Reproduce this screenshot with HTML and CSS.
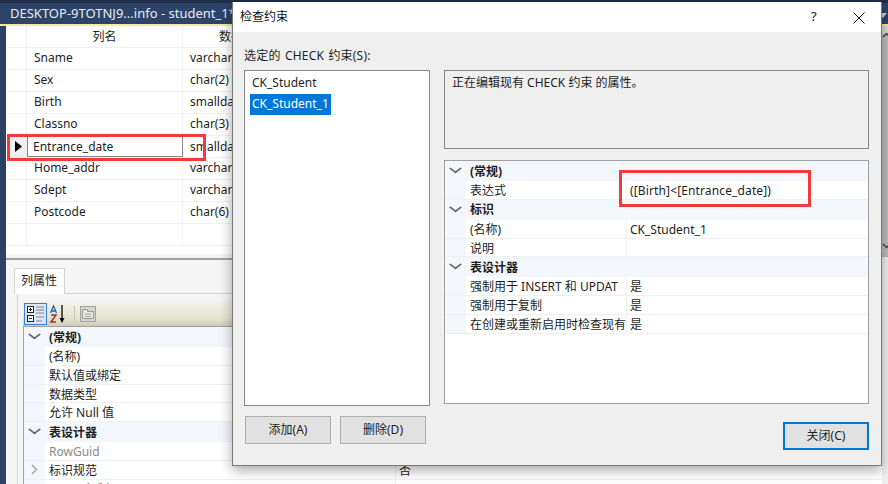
FILE: index.html
```html
<!DOCTYPE html>
<html lang="zh">
<head>
<meta charset="utf-8">
<title>检查约束</title>
<link rel="stylesheet" href="styles.css">
</head>
<body>
<div class="app">
  <div class="titlebar">
    <span class="doc-title">DESKTOP-9TOTNJ9...info - student_1*</span>
    <svg class="tb-drop" width="8" height="5" viewBox="0 0 8 5"><path d="M0 0h8L4 5z" fill="#c9d3e2"/></svg>
  </div>
  <div class="designer">
    <div class="tbl">
      <div class="tr th"><div class="rh"></div><div class="c1">列名</div><div class="c2">数据类型</div></div>
      <div class="tr"><div class="rh"></div><div class="c1">Sname</div><div class="c2">varchar(20)</div></div>
      <div class="tr"><div class="rh"></div><div class="c1">Sex</div><div class="c2">char(2)</div></div>
      <div class="tr"><div class="rh"></div><div class="c1">Birth</div><div class="c2">smalldatetime</div></div>
      <div class="tr"><div class="rh"></div><div class="c1">Classno</div><div class="c2">char(3)</div></div>
      <div class="tr cur"><div class="rh"><svg width="7" height="11" viewBox="0 0 7 11"><path d="M0 0l7 5.500-7 5.500z" fill="#000"/></svg></div><div class="c1">Entrance_date</div><div class="c2">smalldatetime</div></div>
      <div class="tr"><div class="rh"></div><div class="c1">Home_addr</div><div class="c2">varchar(40)</div></div>
      <div class="tr"><div class="rh"></div><div class="c1">Sdept</div><div class="c2">varchar(20)</div></div>
      <div class="tr"><div class="rh"></div><div class="c1">Postcode</div><div class="c2">char(6)</div></div>
      <div class="tr"><div class="rh"></div><div class="c1"></div><div class="c2"></div></div>
    </div>
    <div class="splitter"></div>
    <div class="tabs"><div class="tab">列属性</div></div>
    <div class="tabpane">
      <div class="toolbar">
        <div class="tool active">
          <svg width="20" height="18" viewBox="0 0 20 18"><g fill="none" stroke="#222"><rect x="1.500" y="1.500" width="6" height="6" fill="#fff"/><rect x="1.500" y="10.500" width="6" height="6" fill="#fff"/><path d="M3 4.500h3M4.500 3v3M3 13.500h3"/></g><path d="M10 2h8M10 5h8M10 8h8M10 12h8M10 16h6" stroke="#7d8a9c"/></svg>
        </div>
        <div class="tool sort">
          <svg width="16" height="20" viewBox="0 0 16 20"><path d="M.5 9l3-7 3 7M1.500 7h4" fill="none" stroke="#2a5fb0" stroke-width="1.300"/><path d="M1 11h5l-5 7h5" fill="none" stroke="#a3312a" stroke-width="1.500"/><path d="M12 1v15" stroke="#000" stroke-width="1.300"/><path d="M9.500 14h5L12 19z" fill="#000"/></svg>
        </div>
        <div class="tsep"></div>
        <div class="tool">
          <svg width="16" height="16" viewBox="0 0 16 16"><rect x=".5" y=".5" width="15" height="15" fill="#d4d4ce" stroke="#a4a49e"/><path d="M2.500 3.500h5v2h6v7h-11z" fill="#e6e6e0" stroke="#9c9c96"/><path d="M5 8h6M5 10.500h6" stroke="#a8a8a2"/></svg>
        </div>
      </div>
      <div class="pg bottom-pg">
        <div class="sec"><b>(常规)</b></div>
        <div class="pr"><div class="gut"></div><div class="pn">(名称)</div></div>
        <div class="pr"><div class="gut"></div><div class="pn">默认值或绑定</div></div>
        <div class="pr"><div class="gut"></div><div class="pn">数据类型</div></div>
        <div class="pr"><div class="gut"></div><div class="pn">允许 Null 值</div></div>
        <div class="sec"><b>表设计器</b></div>
        <div class="pr"><div class="gut"></div><div class="pn dim">RowGuid</div></div>
        <div class="pr"><div class="gut"><svg class="exp" width="7" height="11" viewBox="0 0 7 11"><path d="M1 1l4.500 4.500L1 10" fill="none" stroke="#a8a8a8" stroke-width="1.500"/></svg></div><div class="pn">标识规范</div><div class="pv">否</div></div>
        <div class="pr"><div class="gut"></div><div class="pn">不用于复制</div><div class="pv">否</div></div>
      </div>
    </div>
  </div>
  <div class="sidebar">
    <svg class="up" width="9" height="6" viewBox="0 0 9 6"><path d="M1 5l3.500-3.500L8 5" fill="none" stroke="#444" stroke-width="1.500"/></svg>
    <svg class="down" width="9" height="6" viewBox="0 0 9 6"><path d="M1 1l3.500 3.500L8 1" fill="none" stroke="#444" stroke-width="1.500"/></svg>
  </div>
</div>

<div class="redbox box-a"></div>

<div class="dialog">
  <div class="dlg-title">
    <span>检查约束</span>
    <span class="help">?</span>
    <svg class="close" width="12" height="12" viewBox="0 0 12 12"><path d="M.5.500l11 11M11.500.500l-11 11" stroke="#111" fill="none"/></svg>
  </div>
  <div class="dlg-body">
    <div class="col-left">
      <div class="lbl">选定的 CHECK 约束(S):</div>
      <div class="listbox">
        <div class="li">CK_Student</div>
        <div class="li sel">CK_Student_1</div>
      </div>
      <div class="btns">
        <button class="btn">添加(A)</button>
        <button class="btn">删除(D)</button>
      </div>
    </div>
    <div class="col-right">
      <div class="desc">正在编辑现有 CHECK 约束 的属性。</div>
      <div class="pg dlg-pg">
        <div class="sec"><b>(常规)</b></div>
        <div class="pr"><div class="gut"></div><div class="pn">表达式</div><div class="pv expr">([Birth]&lt;[Entrance_date])</div></div>
        <div class="sec"><b>标识</b></div>
        <div class="pr"><div class="gut"></div><div class="pn">(名称)</div><div class="pv">CK_Student_1</div></div>
        <div class="pr"><div class="gut"></div><div class="pn">说明</div><div class="pv"></div></div>
        <div class="sec"><b>表设计器</b></div>
        <div class="pr"><div class="gut"></div><div class="pn">强制用于 INSERT 和 UPDAT</div><div class="pv">是</div></div>
        <div class="pr"><div class="gut"></div><div class="pn">强制用于复制</div><div class="pv">是</div></div>
        <div class="pr"><div class="gut"></div><div class="pn">在创建或重新启用时检查现有</div><div class="pv">是</div></div>
      </div>
      <button class="btn primary">关闭(C)</button>
    </div>
  </div>
</div>

<div class="redbox box-b"></div>
</body>
</html>
```
FILE: styles.css
```css
* { box-sizing: border-box; }
html, body { margin: 0; padding: 0; }
body {
  width: 888px;
  height: 484px;
  overflow: hidden;
  position: relative;
  background: #2d4263;
  font: 12px/1 "Noto Sans", "Noto Sans CJK SC", sans-serif;
  color: #1e1e1e;
}
.app {
  width: 888px;
  height: 484px;
  padding-left: 6px;
  position: relative;
}
.titlebar {
  height: 26px;
  background: linear-gradient(#202e4a 0 3px, #2d4468 3px);
  border-bottom: 2px solid #f5eb9e;
  margin-left: -6px;
  padding: 3px 0 0 10px;
  display: flex;
  align-items: center;
  color: #e6ebf3;
  font-size: 13px;
  position: relative;
}
.tb-drop { position: absolute; right: 1px; top: 13px; }
.designer { background: #f5f5f5; height: 458px; overflow: hidden; }
.tbl { height: 228px; background: #fff; }
.tr { display: flex; height: 22px; border-bottom: 1px solid #f0f0f0; line-height: 20px; white-space: nowrap; }
.th { line-height: 21px; }
.th .c1 { text-align: center; padding-left: 0; }
.th .c2 { padding-left: 36px; }
.rh { width: 21px; border-right: 1px solid #f0f0f0; display: flex; align-items: center; justify-content: center; flex: none; }
.c1 { width: 156px; padding-left: 7px; border-right: 1px solid #f0f0f0; flex: none; }
.c2 { padding-left: 7px; flex: 1; }
.cur { line-height: 21px; }
.cur .rh { background: #f0f0f0; margin-left: 4px; width: 17px; }
.cur .c1 { border: 1px solid #888; padding-left: 5px; line-height: 19px; }
.splitter { height: 6px; border-bottom: 2px solid #a0a0a0; background: #f4f4f4; }
.tabs { height: 33px; padding: 8px 0 0 8px; }
.tab {
  width: 51px;
  height: 26px;
  background: #fff;
  border: 1px solid #d4d4d4;
  border-bottom: 0;
  padding: 6px 0 0 6px;
  position: relative;
}
.tabpane {
  margin-left: 11px;
  padding: 7px 0 0 5px;
  border-top: 1px solid #d4d4d4;
  border-left: 1px solid #d4d4d4;
  background: #f5f5f5;
}
.toolbar {
  height: 26px;
  display: flex;
  align-items: center;
  padding-left: 1px;
  background: linear-gradient(#f3f3ea, #e4e3d2 70%, #cfcdb8);
  border-bottom: 1px solid #a0a0a0;
}
.tool { height: 22px; display: flex; align-items: center; justify-content: center; }
.tool.active { width: 23px; background: #dce6f2; border: 1px solid #3c7fd6; }
.sort { margin-left: 3px; }
.tsep { width: 1px; height: 16px; background: #c4c4b8; margin: 0 5px 0 8px; }
.pg { background: #fff; }
.bottom-pg { border-left: 1px solid #a0a0a0; }
.sec { height: 20px; background: #f3f6fb; display: flex; align-items: center; position: relative; }
.sec b { margin: 1px 0 0 25px; font-weight: 700; }
.sec::before {
  content: "";
  position: absolute;
  left: 6px;
  top: 3px;
  width: 7px;
  height: 7px;
  border-right: 2px solid #666;
  border-bottom: 2px solid #666;
  transform: scale(1, .75) rotate(45deg);
}
.pr { height: 18.75px; display: flex; border-bottom: 1px solid #f0f0f0; align-items: stretch; white-space: nowrap; }
.gut { width: 21px; flex: none; background: #f3f6fb; display: flex; align-items: center; padding-left: 7px; }
.pn { flex: none; padding-left: 4px; line-height: 19px; overflow: hidden; }
.pv { flex: 1; padding-left: 3px; line-height: 19px; border-left: 1px solid #f0f0f0; }
.expr { letter-spacing: .13px; }
.dim { color: #8a8a8a; }
.bottom-pg .pn { width: 350px; }
.dlg-pg .pn { width: 160px; }
.sidebar {
  position: absolute;
  right: 0;
  top: 26px;
  width: 6px;
  height: 458px;
  background: linear-gradient(#d8d8d8 0 8px, #bdbdbd 8px 231px, #efefef 231px);
}
.sidebar svg { position: absolute; left: 0; }
.up { top: 6px; }
.down { top: 217px; }

.dialog {
  position: absolute;
  left: 232px;
  top: 2px;
  width: 650px;
  height: 464px;
  background: #efefef;
  border-left: 1px solid #777;
  border-right: 1px solid #777;
  border-bottom: 1px solid #777;
  box-shadow: 0 4px 12px rgba(0, 0, 0, .35);
}
.dlg-title {
  height: 30px;
  background: #fff;
  display: flex;
  align-items: center;
  padding-left: 7px;
  color: #111;
  position: relative;
}
.help { position: absolute; left: 578px; top: 8px; font-size: 13px; }
.close { position: absolute; left: 620px; top: 10px; }
.dlg-body { display: flex; gap: 14px; padding: 16px 0 0 11px; }
.col-left { width: 186px; flex: none; }
.lbl { height: 22px; padding-top: 2px; word-spacing: 1px; letter-spacing: .2px; }
.listbox { height: 336px; background: #fff; border: 1px solid #888; padding: 2px 5px; }
.li { height: 21px; line-height: 20px; padding-left: 2px; width: 81px; }
.sel { background: #0078d7; color: #fff; }
.btns { margin-top: 10px; margin-left: 1px; display: flex; gap: 9px; }
.btn {
  width: 86px;
  height: 28px;
  background: #e1e1e1;
  border: 1px solid #adadad;
  font: inherit;
  color: #1e1e1e;
  padding: 0;
}
.col-right { width: 425px; flex: none; display: flex; flex-direction: column; padding-top: 22px; }
.desc { height: 79px; border: 1px solid #888; padding: 6px 7px; background: #efefef; }
.dlg-pg { height: 244px; margin-top: 11px; border: 1px solid #a0a0a0; }
.primary { align-self: flex-end; margin-top: 18px; border: 2px solid #0078d7; }
.redbox { position: absolute; border: 3px solid #f23a3a; }
.box-a { left: 7px; top: 134px; width: 199px; height: 27px; }
.box-b { left: 619px; top: 170px; width: 192px; height: 37px; }
```
